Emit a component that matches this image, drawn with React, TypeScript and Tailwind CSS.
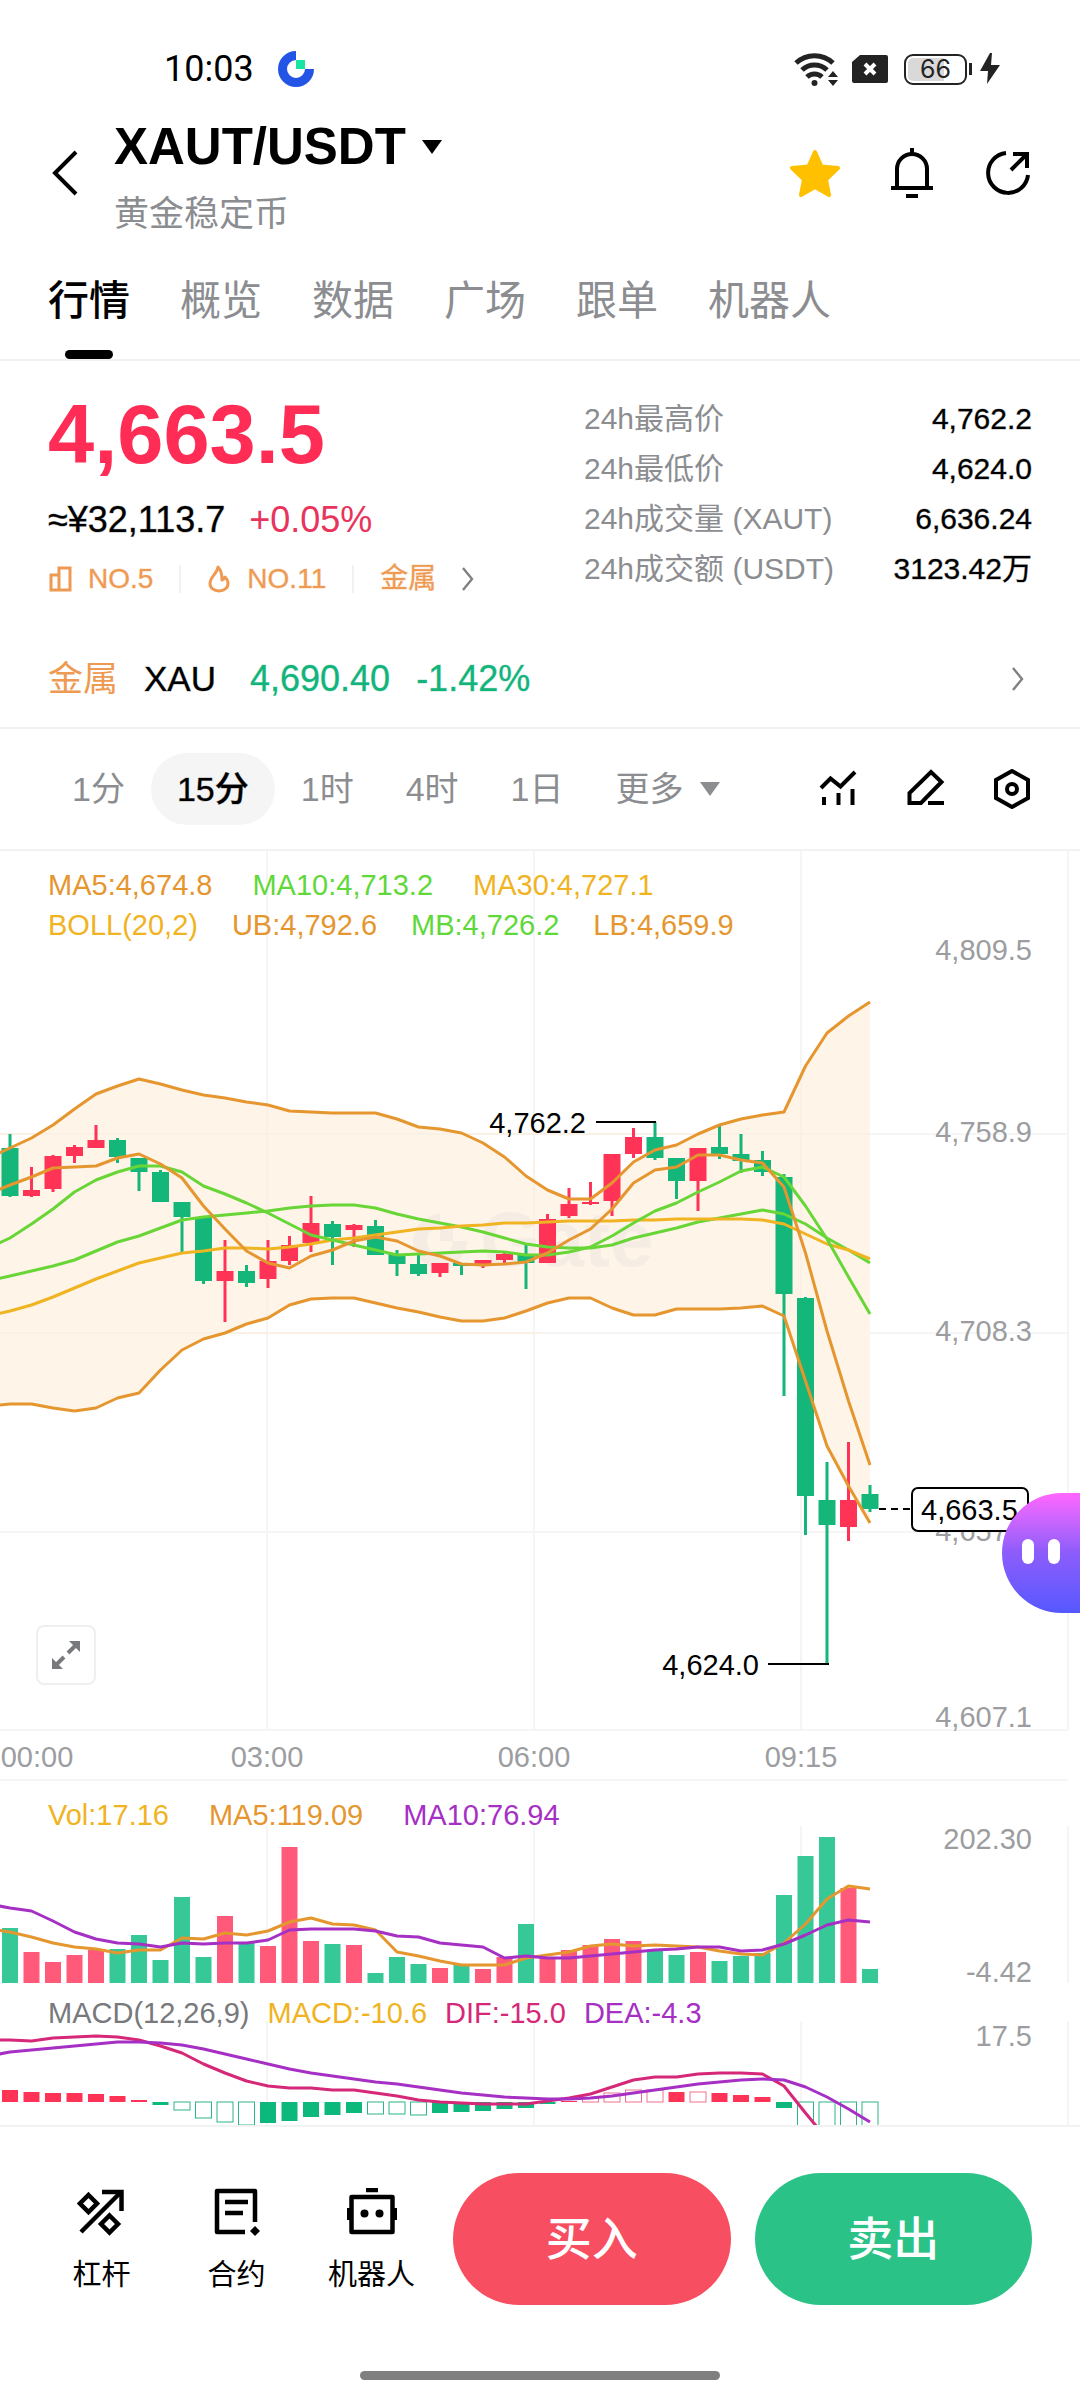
import type { ReactNode } from 'react'

const STEP = 21.5
const FIRST_X = 10

type Side = 'up' | 'down'

// side, high, body top, body bottom, low
const candles: [Side, number, number, number, number][] = [
  ['down', 283, 297, 345, 346],
  ['up', 316, 339, 345, 346],
  ['up', 304, 305, 338, 341],
  ['up', 294, 296, 305, 312],
  ['up', 274, 289, 297, 297],
  ['down', 287, 289, 306, 312],
  ['down', 307, 307, 321, 340],
  ['down', 319, 321, 351, 351],
  ['down', 351, 351, 366, 401],
  ['down', 366, 366, 430, 433],
  ['up', 389, 420, 430, 471],
  ['down', 414, 420, 432, 436],
  ['up', 389, 410, 428, 437],
  ['up', 385, 394, 410, 414],
  ['up', 345, 372, 392, 401],
  ['down', 370, 373, 386, 414],
  ['up', 373, 374, 379, 396],
  ['down', 369, 375, 404, 404],
  ['down', 399, 403, 413, 425],
  ['down', 404, 413, 423, 425],
  ['up', 412, 412, 422, 426],
  ['down', 412, 412, 415, 424],
  ['up', 409, 409, 414, 417],
  ['up', 402, 403, 409, 412],
  ['down', 393, 404, 412, 438],
  ['up', 363, 368, 412, 412],
  ['up', 337, 353, 365, 367],
  ['up', 331, 351, 353, 354],
  ['up', 303, 303, 350, 365],
  ['up', 277, 286, 303, 307],
  ['down', 271, 286, 307, 309],
  ['down', 307, 307, 330, 348],
  ['up', 297, 297, 330, 360],
  ['down', 275, 296, 303, 308],
  ['down', 283, 303, 310, 322],
  ['down', 300, 309, 321, 325],
  ['down', 323, 326, 443, 545],
  ['down', 446, 447, 645, 684],
  ['down', 611, 649, 674, 813],
  ['up', 591, 649, 676, 690],
  ['down', 634, 643, 658, 661],
]

// every line starts one step left of the first candle
const upperBand = [307, 297, 287, 274, 258, 243, 235, 228, 233, 239, 244, 247, 251, 254, 260, 261, 262, 262, 262, 268, 276, 278, 282, 292, 306, 325, 339, 348, 348, 332, 311, 299, 294, 283, 274, 268, 264, 261, 215, 182, 165, 151]
const lowerBand = [555, 553, 553, 557, 560, 557, 547, 542, 519, 499, 488, 482, 473, 467, 454, 448, 447, 447, 452, 457, 461, 466, 470, 470, 467, 460, 452, 447, 447, 457, 464, 464, 458, 458, 458, 457, 455, 465, 530, 595, 635, 672]
const middleBand = [430, 425, 420, 415, 409, 400, 391, 385, 377, 369, 366, 364, 362, 360, 357, 355, 354, 354, 357, 363, 368, 372, 376, 381, 387, 393, 396, 397, 397, 394, 387, 382, 377, 371, 367, 363, 359, 363, 373, 387, 399, 412]
const ma5 = [343, 334, 326, 317, 316, 315, 307, 303, 313, 327, 355, 378, 400, 412, 417, 405, 399, 390, 386, 390, 400, 405, 413, 414, 413, 411, 402, 389, 378, 358, 332, 319, 316, 304, 304, 309, 312, 336, 402, 480, 550, 614]
const ma10 = [397, 387, 373, 358, 341, 329, 321, 315, 315, 321, 335, 343, 352, 362, 373, 384, 389, 394, 399, 404, 403, 402, 401, 400, 401, 404, 404, 401, 396, 385, 372, 360, 352, 341, 331, 320, 316, 326, 355, 388, 426, 463]
const ma30 = [465, 460, 454, 446, 437, 428, 420, 412, 407, 402, 400, 397, 397, 398, 396, 393, 389, 387, 384, 381, 378, 377, 375, 374, 372, 372, 371, 370, 370, 370, 369, 369, 368, 368, 368, 368, 369, 373, 383, 393, 399, 408]

const volumeTops = [147, 171, 181, 174, 169, 168, 154, 179, 116, 176, 135, 162, 165, 66, 160, 163, 164, 192, 176, 183, 187, 184, 188, 176, 143, 177, 169, 164, 158, 160, 169, 174, 171, 180, 175, 172, 114, 75, 56, 107, 188]
const volMa5 = [148, 151, 156, 162, 166, 168, 172, 169, 169, 157, 158, 152, 154, 150, 141, 137, 143, 144, 149, 171, 175, 180, 184, 184, 184, 177, 174, 171, 165, 163, 165, 164, 165, 166, 170, 173, 174, 162, 143, 118, 105, 108]
const volMa10 = [123, 127, 130, 140, 151, 158, 162, 163, 166, 162, 163, 162, 162, 159, 149, 148, 148, 148, 150, 155, 156, 162, 164, 166, 177, 175, 177, 177, 175, 173, 171, 169, 168, 166, 166, 170, 169, 163, 154, 144, 139, 141]

const dif = [259, 259, 260, 257, 256, 255, 256, 259, 265, 272, 283, 292, 300, 305, 307, 307, 309, 309, 312, 315, 319, 321, 322, 323, 323, 323, 320, 317, 313, 306, 299, 296, 296, 293, 292, 292, 293, 305, 332, 358]
const dea = [275, 271, 269, 267, 265, 263, 261, 261, 262, 264, 268, 273, 278, 283, 288, 292, 295, 298, 301, 303, 306, 309, 312, 314, 316, 317, 318, 318, 317, 315, 312, 309, 306, 303, 301, 299, 298, 299, 306, 316, 328, 341]
const histogram = [12, 10, 9, 9, 8, 6, 2, -3, -8, -16, -20, -23, -21, -19, -15, -13, -11, -12, -12, -13, -11, -10, -9, -7, -6, -2, 1, 4, 9, 12, 12, 10, 10, 9, 7, 5, -6, -40, -40, -40, -40]
const hollow = [8, 9, 10, 11, 17, 18, 19, 27, 28, 29, 30, 32, 37, 38, 39, 40]

const gridX = [267, 534, 801, 1068]

const tabs = ['行情', '概览', '数据', '广场', '跟单', '机器人']
const intervals = ['1分', '15分', '1时', '4时', '1日']
const stats = [
  ['24h最高价', '4,762.2'],
  ['24h最低价', '4,624.0'],
  ['24h成交量 (XAUT)', '6,636.24'],
  ['24h成交额 (USDT)', '3123.42万'],
]

const centerX = (i: number) => FIRST_X + i * STEP
const toPoints = (ys: number[]) => ys.map((y, i) => `${centerX(i - 1)},${y}`)

function Line({ ys, className }: { ys: number[]; className: string }) {
  return (
    <polyline
      points={toPoints(ys).join(' ')}
      fill="none"
      strokeWidth="3"
      strokeLinejoin="round"
      className={className}
    />
  )
}

function Chevron({ className }: { className: string }) {
  return (
    <svg viewBox="0 0 12 24" className={className} fill="none" stroke="currentColor" strokeWidth="2.4">
      <path d="M1 1l9 11-9 11" />
    </svg>
  )
}

function StatusBar() {
  return (
    <div className="flex h-[114px] items-center justify-between pt-6 pr-20 pl-[164px]">
      <div className="flex items-center gap-6">
        <span className="font-[Roboto] text-[36px] leading-none">10:03</span>
        <svg viewBox="0 0 36 36" className="size-9">
          <path d="M18 4.5A13.5 13.5 0 1 0 31.500 18" fill="none" stroke="#2354e6" strokeWidth="9" />
          <path d="M18 9h9v9h-9z" fill="#17e5a1" />
        </svg>
      </div>
      <div className="flex items-center text-[#232323]">
        <svg viewBox="0 0 46 36" className="h-9 w-[46px]" fill="none" stroke="currentColor" strokeWidth="5">
          <path d="M2 12a27 27 0 0 1 37 0M8 19a18 18 0 0 1 25 0M13 26a11 11 0 0 1 15 0" />
          <circle cx="20.500" cy="32" r="3" fill="currentColor" stroke="none" />
          <path d="M34 26l5-6 5 6zM34 29l5 6 5-6z" fill="currentColor" stroke="none" />
        </svg>
        <svg viewBox="0 0 36 30" className="ml-3 h-[30px] w-9">
          <path d="M8 1h26a2 2 0 0 1 2 2v24a2 2 0 0 1-2 2H2a2 2 0 0 1-2-2V8z" fill="currentColor" />
          <path d="M13 10l10 10M23 10L13 20" stroke="#fff" strokeWidth="4" />
        </svg>
        <div className="ml-4 flex h-[31px] w-[63px] items-center rounded-[9px] border-2 border-[#232323] bg-linear-to-r from-[#d9d9d9] from-65% to-white to-65% bg-clip-content p-0.5">
          <span className="w-full text-center font-[Inter] text-[25px] leading-none">66</span>
        </div>
        <div className="ml-0.5 h-3 w-[3px] bg-[#232323]" />
        <svg viewBox="0 0 20 32" className="ml-2 h-8 w-5">
          <path d="M10 0L0 18h8l-1 13L20 12h-9l1-12z" fill="currentColor" />
        </svg>
      </div>
    </div>
  )
}

function Header() {
  return (
    <header className="flex h-[128px] items-start pr-12 pl-[50px]">
      <button aria-label="返回" className="mt-9 w-16">
        <svg viewBox="0 0 28 46" className="h-[46px] w-7" fill="none" stroke="currentColor" strokeWidth="4">
          <path d="M26 2L5 23l21 21" />
        </svg>
      </button>
      <div className="flex-1">
        <button className="flex items-center gap-4">
          <h1 className="text-[51px] leading-[66px] font-bold">XAUT/USDT</h1>
          <svg viewBox="0 0 20 14" className="h-3.5 w-5">
            <path d="M0 0h20L10 14z" fill="currentColor" />
          </svg>
        </button>
        <p className="text-[35px] leading-[68px] text-[#8b8d90]">黄金稳定币</p>
      </div>
      <div className="mt-[34px] flex items-center gap-12">
        <button aria-label="收藏">
          <svg viewBox="0 0 50 48" className="h-12 w-[50px]" fill="#ffc000" stroke="#ffc000" strokeWidth="4" strokeLinejoin="round">
            <path d="M25 3l6.500 14.500L48 19 36 30.500 39 46l-14-8-14 8 3-15.500L2 19l16.500-1.500z" />
          </svg>
        </button>
        <button aria-label="提醒">
          <svg viewBox="0 0 48 50" className="h-[50px] w-12" fill="none" stroke="currentColor" strokeWidth="4">
            <path d="M9 39V21a15 15 0 0 1 30 0v18M3 40h42M24 0v6M18 48h12" />
          </svg>
        </button>
        <button aria-label="分享">
          <svg viewBox="0 0 48 48" className="size-12" fill="none" stroke="currentColor" strokeWidth="4">
            <path d="M22 4a20 20 0 1 0 22 22M27 21L42 6M29 5h14v14" />
          </svg>
        </button>
      </div>
    </header>
  )
}

function Tabs() {
  return (
    <nav className="flex h-[119px] gap-[50px] border-b-2 border-[#f2f2f3] px-12">
      {tabs.map((tab, i) => (
        <a
          key={tab}
          href="#"
          className={
            i === 0
              ? 'flex flex-col items-center justify-between pt-[29px] font-medium text-black'
              : 'flex flex-col items-center pt-[29px] text-[#8b8d90]'
          }
        >
          <span className="text-[41px] leading-[60px]">{tab}</span>
          {i === 0 && <span className="h-[9px] w-12 rounded-full bg-black" />}
        </a>
      ))}
    </nav>
  )
}

function Summary() {
  return (
    <section className="flex justify-between px-12 pt-8">
      <div>
        <p className="text-[83px] leading-[84px] font-bold text-[#ff2d55]">4,663.5</p>
        <p className="mt-5 flex gap-6 text-[36px] leading-[46px]">
          <span className="[-webkit-text-stroke:1px_#00000059]">≈¥32,113.7</span>
          <span className="text-[#e8345c]">+0.05%</span>
        </p>
        <div className="mt-4 flex h-10 items-center text-[28px] text-[#ee9a52] [-webkit-text-stroke:1px_#ee9a5259]">
          <svg viewBox="0 0 24 26" className="mr-4 h-[26px] w-6" fill="none" stroke="currentColor" strokeWidth="3">
            <path d="M11 9H3v15h19V2H11v22" />
          </svg>
          NO.5
          <span className="mx-[26px] h-7 w-0.5 bg-[#f2f2f3]" />
          <svg viewBox="0 0 24 28" className="mr-4 h-7 w-6" fill="none" stroke="currentColor" strokeWidth="3" strokeLinejoin="round">
            <path d="M11 2C10 9 3 12 3 18.500c0 4.500 4 7.500 9 7.500s9-3 9-7.500c0-3-1.500-5-3-6.500-.5 1.500-1.500 2.500-3 3C15 10 14 5 11 2z" />
          </svg>
          NO.11
          <span className="mx-[26px] h-7 w-0.5 bg-[#f2f2f3]" />
          <a href="#" className="flex items-center">
            金属
            <Chevron className="ml-[26px] h-6 w-3 text-[#7f8184]" />
          </a>
        </div>
      </div>
      <dl className="w-[448px]">
        {stats.map(([label, value]) => (
          <div key={label} className="flex h-[50px] items-center justify-between text-[30px]">
            <dt className="text-[#8b8d90]">{label}</dt>
            <dd className="[-webkit-text-stroke:1px_#00000059]">{value}</dd>
          </div>
        ))}
      </dl>
    </section>
  )
}

function MetalRow() {
  return (
    <a href="#" className="mt-8 flex h-[98px] items-center border-b-2 border-[#f2f2f3] px-12 text-[35px]">
      <span className="text-[#ee9a52]">金属</span>
      <span className="ml-[26px] [-webkit-text-stroke:1px_#00000059]">XAU</span>
      <span className="ml-[34px] text-[36px] text-[#12b47c] [-webkit-text-stroke:1px_#12b47c59]">4,690.40</span>
      <span className="ml-[26px] text-[36px] text-[#12b47c] [-webkit-text-stroke:1px_#12b47c59]">-1.42%</span>
      <Chevron className="mr-2 ml-auto h-6 w-3 text-[#7f8184]" />
    </a>
  )
}

function IntervalBar() {
  return (
    <div className="flex h-[122px] items-center border-b-2 border-[#f2f2f3] pr-12 pl-[46px] text-[34px] text-[#8b8d90]">
      {intervals.map((interval) => (
        <button
          key={interval}
          className={
            interval === '15分'
              ? 'h-[72px] rounded-full bg-[#f5f5f5] px-[26px] font-medium text-black [-webkit-text-stroke:1px_#00000059]'
              : 'h-[72px] px-[26px]'
          }
        >
          {interval}
        </button>
      ))}
      <button className="flex h-[72px] items-center gap-4 pl-[26px]">
        更多
        <svg viewBox="0 0 20 14" className="h-3.5 w-5">
          <path d="M0 0h20L10 14z" fill="currentColor" />
        </svg>
      </button>
      <div className="ml-auto flex gap-[47px] text-black">
        <button aria-label="指标">
          <svg viewBox="0 0 40 40" className="size-10" fill="none" stroke="currentColor" strokeWidth="4">
            <path d="M3 19l9.500-9.500 10 8L37 3M6 28v8M20.500 24v12M34.500 20v16" />
          </svg>
        </button>
        <button aria-label="画线">
          <svg viewBox="0 0 40 40" className="size-10" fill="none" stroke="currentColor" strokeWidth="4">
            <path d="M4.500 34V24L26 3l10.500 10L16 34zM23 34h16" />
          </svg>
        </button>
        <button aria-label="设置">
          <svg viewBox="0 0 40 40" className="size-10" fill="none" stroke="currentColor" strokeWidth="4">
            <path d="M20 2l16 9v18l-16 9-16-9V11z" />
            <circle cx="20" cy="20" r="5" />
          </svg>
        </button>
      </div>
    </div>
  )
}

function PriceChart() {
  const band = [...toPoints(upperBand), ...toPoints(lowerBand).reverse()].join(' ')
  return (
    <div className="relative">
      <svg viewBox="0 0 1080 930" className="block w-full text-[29px]" role="img" aria-label="XAUT/USDT 15分">
        <g className="stroke-[#f5f5f6]" strokeWidth="2">
          {gridX.map((x) => (
            <path key={x} d={`M${x} 0V879`} />
          ))}
          <path d="M0 283H1068M0 482H1068M0 681H1068M0 879H1068M0 929H1068" />
        </g>
        <polygon points={band} className="fill-[#fef4e8]" />
        <path d="M267 254V467M534 306V467M801 226V495M0 283H870M0 482H540" className="stroke-[#faf0e5]" strokeWidth="2" />

        <g className="fill-[#f5ece3]">
          <path d="M440 363a27 27 0 1 0 27 27h-14a13 13 0 1 1-13-13z" />
          <path d="M440 377h13v13h-13z" />
          <text x="480" y="415" className="text-[78px] font-bold">Gate</text>
        </g>

        {candles.map(([side, high, top, bottom, low], i) => (
          <g key={i} className={side === 'up' ? 'fill-[#ff3355]' : 'fill-[#14b679]'}>
            <rect x={centerX(i) - 1.5} y={high} width="3" height={low - high} />
            <rect x={centerX(i) - 8.5} y={top} width="17" height={bottom - top} />
          </g>
        ))}

        <Line ys={upperBand} className="stroke-[#e5962f]" />
        <Line ys={lowerBand} className="stroke-[#e5962f]" />
        <Line ys={middleBand} className="stroke-[#68d636]" />
        <Line ys={ma30} className="stroke-[#f0b322]" />
        <Line ys={ma10} className="stroke-[#68d636]" />
        <Line ys={ma5} className="stroke-[#e5962f]" />

        <g className="fill-[#9b9da0]" textAnchor="end">
          <text x="1032" y="109">4,809.5</text>
          <text x="1032" y="291">4,758.9</text>
          <text x="1032" y="490">4,708.3</text>
          <text x="1032" y="690">4,657.7</text>
          <text x="1032" y="876">4,607.1</text>
        </g>
        <g className="fill-[#9b9da0]" textAnchor="middle">
          <text x="37" y="916">00:00</text>
          <text x="267" y="916">03:00</text>
          <text x="534" y="916">06:00</text>
          <text x="801" y="916">09:15</text>
        </g>

        <path d="M596 271h60M768 813h61" stroke="#000" strokeWidth="2" />
        <text x="586" y="282" textAnchor="end">4,762.2</text>
        <text x="759" y="824" textAnchor="end">4,624.0</text>

        <path d="M879 658h32" stroke="#000" strokeWidth="2" strokeDasharray="7 5" />
        <rect x="912" y="637" width="116" height="43" rx="6" fill="#fff" stroke="#000" strokeWidth="2" />
        <text x="921" y="669">4,663.5</text>
      </svg>

      <div className="absolute top-3.5 left-12 text-[29px] leading-10">
        <p className="flex gap-10">
          <span className="text-[#e5962f]">MA5:4,674.8</span>
          <span className="text-[#5fd83a]">MA10:4,713.2</span>
          <span className="text-[#f0b322]">MA30:4,727.1</span>
        </p>
        <p className="flex gap-[34px]">
          <span className="text-[#f0b322]">BOLL(20,2)</span>
          <span className="text-[#e5962f]">UB:4,792.6</span>
          <span className="text-[#5fd83a]">MB:4,726.2</span>
          <span className="text-[#e5962f]">LB:4,659.9</span>
        </p>
      </div>

      <button
        aria-label="全屏"
        className="absolute bottom-[96px] left-9 flex size-[60px] items-center justify-center rounded-lg border-2 border-[#efefef] bg-white"
      >
        <svg viewBox="0 0 30 30" className="size-[30px] text-[#77797c]" fill="none" stroke="currentColor" strokeWidth="4">
          <path d="M17 13L26 4M13 17L4 26" />
          <path d="M18 1h11v11zM1 18v11h11z" fill="currentColor" stroke="none" />
        </svg>
      </button>

      <button
        aria-label="助手"
        className="absolute top-[642px] right-0 flex h-[120px] w-[78px] justify-start gap-3.5 rounded-l-full bg-linear-to-b from-[#ff66ff] via-[#8c5cfb] to-[#5558ff] pt-[46px] pl-5"
      >
        <span className="h-[25px] w-3 rounded-full bg-white" />
        <span className="h-[25px] w-3 rounded-full bg-white" />
      </button>
    </div>
  )
}

function Legend({ className, children }: { className: string; children: ReactNode }) {
  return <p className={`absolute left-12 flex text-[29px] leading-10 ${className}`}>{children}</p>
}

function IndicatorCharts() {
  return (
    <div className="relative border-b-2 border-[#f2f2f3]">
      <svg viewBox="0 0 1080 344" className="block w-full text-[29px]" role="img" aria-label="Vol MACD">
        <g className="stroke-[#f5f5f6]" strokeWidth="2">
          {gridX.map((x) => (
            <path key={x} d={`M${x} 45V202M${x} 240V344`} />
          ))}
        </g>

        {volumeTops.map((top, i) => (
          <rect
            key={i}
            x={centerX(i) - 8}
            y={top}
            width="16"
            height={202 - top}
            className={candles[i][0] === 'up' ? 'fill-[#ff5a7a]' : 'fill-[#36c896]'}
          />
        ))}
        <Line ys={volMa5} className="stroke-[#e5962f]" />
        <Line ys={volMa10} className="stroke-[#a62fc4]" />

        {histogram.map((value, i) => {
          const y = value > 0 ? 321 - value : 321
          const height = Math.abs(value)
          if (hollow.includes(i)) {
            return (
              <rect
                key={i}
                x={centerX(i) - 8}
                y={y}
                width="16"
                height={height}
                fill="#fff"
                className={value > 0 ? 'stroke-[#f0708c]' : 'stroke-[#2db488]'}
              />
            )
          }
          return (
            <rect
              key={i}
              x={centerX(i) - 8}
              y={y}
              width="16"
              height={height}
              className={value > 0 ? 'fill-[#ff3355]' : 'fill-[#0cb87c]'}
            />
          )
        })}
        <Line ys={dif} className="stroke-[#d62878]" />
        <Line ys={dea} className="stroke-[#a62fc4]" />

        <g className="fill-[#9b9da0]" textAnchor="end">
          <text x="1032" y="68">202.30</text>
          <text x="1032" y="201">-4.42</text>
          <text x="1032" y="265">17.5</text>
        </g>
      </svg>

      <Legend className="top-3.5 gap-10">
        <span className="text-[#f0b322]">Vol:17.16</span>
        <span className="text-[#e5962f]">MA5:119.09</span>
        <span className="text-[#a62fc4]">MA10:76.94</span>
      </Legend>
      <Legend className="top-[212px] gap-[18px]">
        <span className="text-[#77797c]">MACD(12,26,9)</span>
        <span className="text-[#f0b322]">MACD:-10.6</span>
        <span className="text-[#d62878]">DIF:-15.0</span>
        <span className="text-[#a62fc4]">DEA:-4.3</span>
      </Legend>
    </div>
  )
}

function NavItem({ label, children }: { label: string; children: ReactNode }) {
  return (
    <a href="#" className="flex w-[135px] flex-col items-center gap-4 text-[29px] leading-[42px]">
      <svg viewBox="0 0 50 50" className="size-[50px]" fill="none" stroke="currentColor" strokeWidth="4.500">
        {children}
      </svg>
      {label}
    </a>
  )
}

function BottomBar() {
  return (
    <footer>
      <div className="flex h-[224px] items-center pr-12 pl-[34px]">
        <div className="flex pt-1.5">
          <NavItem label="杠杆">
            <path d="M11.500 7l8.500 8.500-8.500 8.500L3 15.500zM32.500 27.500l8.500 8.500-8.500 8.500L24 36zM4 44L44 4" />
            <path d="M25 4h19.500v19" />
          </NavItem>
          <NavItem label="合约">
            <path d="M43 34V3H5v41h28M13 14h23M13 25h18" strokeLinejoin="round" />
            <path d="M43 38l5 5-5 5-5-5z" fill="currentColor" stroke="none" />
          </NavItem>
          <NavItem label="机器人">
            <path d="M4.500 9h41v35h-41z" strokeLinejoin="round" />
            <path d="M19 2h12M2 20v12M48 20v12" />
            <circle cx="17.500" cy="25.500" r="4" fill="currentColor" stroke="none" />
            <circle cx="32.500" cy="25.500" r="4" fill="currentColor" stroke="none" />
          </NavItem>
        </div>
        <div className="ml-3.5 flex flex-1 gap-6 text-[46px] font-medium text-white">
          <button className="h-[132px] flex-1 rounded-full bg-[#f84e61]">买入</button>
          <button className="h-[132px] flex-1 rounded-full bg-[#2bc287]">卖出</button>
        </div>
      </div>
      <div className="mx-auto mt-5 mb-5 h-[9px] w-1/3 rounded-full bg-[#7f7f7f]" />
    </footer>
  )
}

export default function App() {
  return (
    <main className="w-full overflow-hidden bg-white font-['Liberation_Sans','Noto_Sans_CJK_SC',sans-serif] text-black">
      <StatusBar />
      <Header />
      <Tabs />
      <Summary />
      <MetalRow />
      <IntervalBar />
      <PriceChart />
      <IndicatorCharts />
      <BottomBar />
    </main>
  )
}
